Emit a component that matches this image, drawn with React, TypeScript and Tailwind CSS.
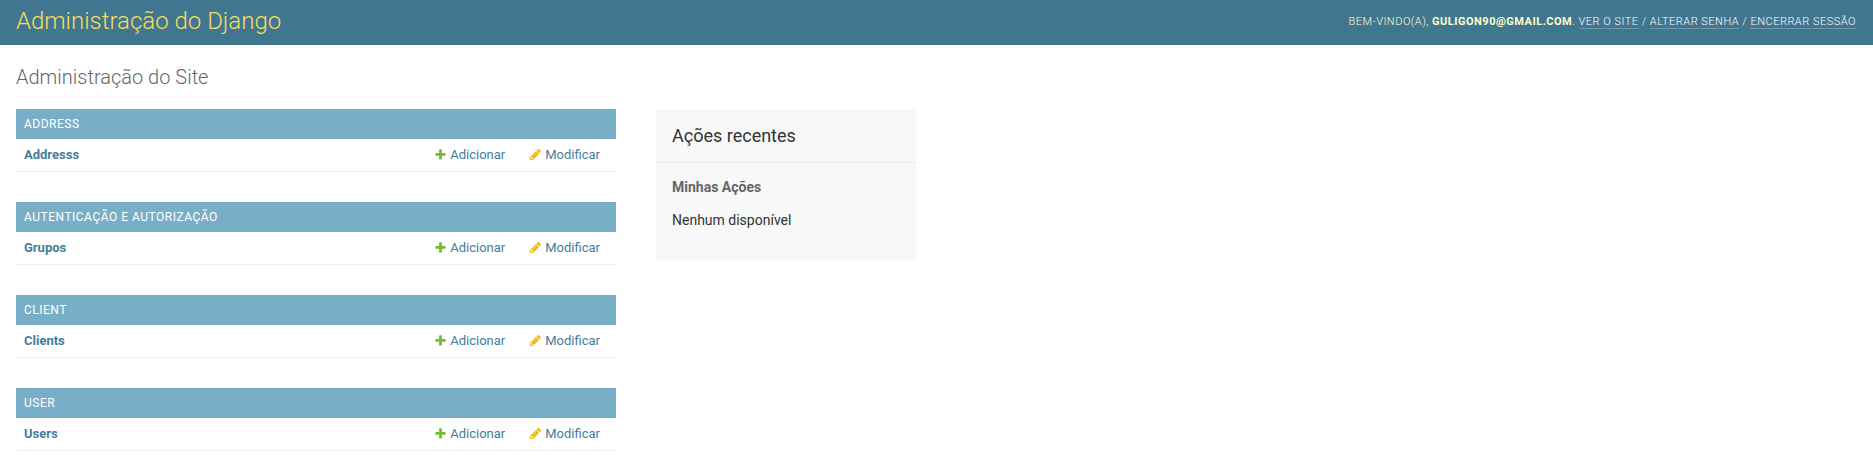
const groups = [
  { title: 'Address', model: 'Addresss' },
  { title: 'Autenticação e Autorização', model: 'Grupos' },
  { title: 'Client', model: 'Clients' },
  { title: 'User', model: 'Users' },
];

function PlusIcon() {
  return (
    <svg className="mt-px mr-[3px] size-[13px] shrink-0 self-start" viewBox="0 0 1792 1792" fill="#70bf2b">
      <path d="M1600 796v192q0 40-28 68t-68 28h-416v416q0 40-28 68t-68 28h-192q-40 0-68-28t-28-68v-416h-416q-40 0-68-28t-28-68v-192q0-40 28-68t68-28h416v-416q0-40 28-68t68-28h192q40 0 68 28t28 68v416h416q40 0 68 28t28 68z" />
    </svg>
  );
}

function PencilIcon() {
  return (
    <svg className="mt-px mr-[3px] size-[13px] shrink-0 self-start" viewBox="0 0 1792 1792" fill="#efb80b">
      <path d="M491 1536l91-91-235-235-91 91v107h128v128h107zm523-928q0-22-22-22-10 0-17 7l-542 542q-7 7-7 17 0 22 22 22 10 0 17-7l542-542q7-7 7-17zm-54-192l416 416-832 832h-416v-416zm683 96q0 53-37 90l-166 166-416-416 166-165q36-38 90-38 53 0 91 38l235 234q37 39 37 91z" />
    </svg>
  );
}

function Group({ title, model }: { title: string; model: string }) {
  return (
    <section className="mb-[30px] text-[13px]">
      <h2 className="flex h-[30px] items-center bg-[#79aec8] px-2 text-[12px] tracking-[0.5px] text-white uppercase">{title}</h2>
      <div className="flex h-[33px] items-center border-b border-[#eee] px-2 leading-4 text-[#447e9b]">
        <a className="flex-1 font-bold">{model}</a>
        <a className="mr-6 flex items-center"><PlusIcon />Adicionar</a>
        <a className="mr-2 flex items-center"><PencilIcon />Modificar</a>
      </div>
    </section>
  );
}

export default function App() {
  return (
    <div className="min-h-screen bg-white font-[Roboto,sans-serif] text-[#333]">
      <header className="flex h-[45px] items-center justify-between bg-[#417690] pr-[17px] pl-4 text-[#ffc]">
        <h1 className="pb-1 text-[24px] font-light text-[#f5dd5d]">Administração do Django</h1>
        <div className="text-[11px] font-light tracking-[0.5px] uppercase">
          Bem-vindo(a), <strong className="font-bold">guligon90@gmail.com</strong>. <a className="border-b border-white/25 text-white">Ver o site</a> / <a className="border-b border-white/25 text-white">Alterar senha</a> / <a className="border-b border-white/25 text-white">Encerrar sessão</a>
        </div>
      </header>
      <main className="px-4 pt-5">
        <h1 className="mb-5 text-[20px] leading-6 font-light text-[#666]">Administração do Site</h1>
        <div className="flex items-start">
          <div className="w-[600px]">
            {groups.map((g) => <Group key={g.title} {...g} />)}
          </div>
          <aside className="ml-10 h-[151px] w-[260px] bg-[#f8f8f8]">
            <h2 className="flex h-[54px] items-center border-b border-[#eaeaea] px-4 text-[18px]">Ações recentes</h2>
            <h3 className="mt-4 px-4 text-[14px] leading-4 font-bold text-[#666]">Minhas Ações</h3>
            <p className="mt-[15px] px-4 text-[14px] leading-5">Nenhum disponível</p>
          </aside>
        </div>
      </main>
    </div>
  );
}
